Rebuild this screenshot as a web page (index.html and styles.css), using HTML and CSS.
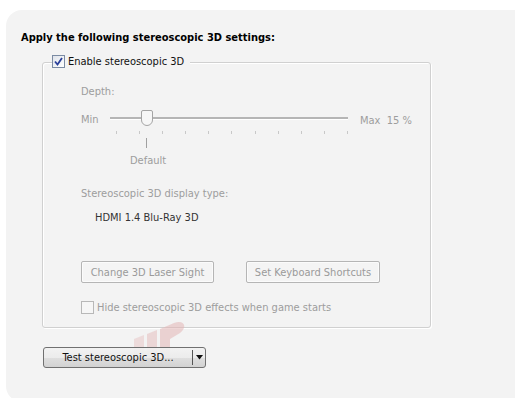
FILE: index.html
```html
<!DOCTYPE html>
<html>
<head>
<meta charset="utf-8">
<link rel="stylesheet" href="styles.css">
</head>
<body>
<div class="panel">
  <h1 class="title">Apply the following stereoscopic 3D settings:</h1>
  <div class="group">
    <div class="legend">
      <span class="cb checked"><svg width="9" height="9" viewBox="0 0 9 9"><path d="M1 4.5 L3.5 7.5 L8 1" fill="none" stroke="#2a3f9a" stroke-width="1.8"/></svg></span>
      <span class="legend-text">Enable stereoscopic 3D</span>
    </div>
    <div class="label depth">Depth:</div>
    <div class="slider-row">
      <span class="label min">Min</span>
      <div class="slider">
        <div class="track"></div>
        <div class="thumb"></div>
        <div class="ticks">
          <i></i><i></i><i></i><i></i><i></i><i></i><i></i><i></i><i></i><i></i><i></i>
        </div>
        <div class="default-tick"></div>
      </div>
      <span class="label max">Max&nbsp; 15 %</span>
    </div>
    <div class="label default">Default</div>
    <div class="label type">Stereoscopic 3D display type:</div>
    <div class="value">HDMI 1.4 Blu-Ray 3D</div>
    <div class="buttons">
      <button class="btn b1">Change 3D Laser Sight</button>
      <button class="btn b2">Set Keyboard Shortcuts</button>
    </div>
    <div class="hide-row">
      <span class="cb off"></span>
      <span class="label hide">Hide stereoscopic 3D effects when game starts</span>
    </div>
  </div>
  <svg class="watermark" width="60" height="45" viewBox="0 0 60 45">
    <path d="M4 20 L14 16 L14 44 L4 44 Z" fill="#e9c9c9" opacity="0.8"/>
    <path d="M17 15 L27 11 L27 44 L17 44 Z" fill="#e6c0c0" opacity="0.8"/>
    <path d="M30 10 L44 4 C54 0 58 8 50 14 L40 20 L40 40 L30 40 Z" fill="#e3b7b7" opacity="0.8"/>
  </svg>
  <div class="test">
    <span class="test-label">Test stereoscopic 3D...</span>
    <span class="test-sep"></span>
    <span class="test-arrow"><svg width="7" height="5" viewBox="0 0 7 5"><path d="M0 0 H7 L3.5 4.5 Z" fill="#111"/></svg></span>
  </div>
</div>
</body>
</html>
```
FILE: styles.css
```css
html, body {
  margin: 0;
  padding: 0;
  background: #ffffff;
  width: 515px;
  height: 398px;
  overflow: hidden;
}
.panel {
  position: relative;
  margin: 10px 0 0 6px;
  width: 509px;
  height: 392px;
  background: #f3f3f3;
  border-radius: 16px 0 0 16px;
  font-family: "DejaVu Sans Condensed", "DejaVu Sans", Tahoma, sans-serif;
  font-stretch: condensed;
  font-size: 11px;
  color: #1a1a1a;
  padding-top: 21px;
  box-sizing: border-box;
}
.title {
  margin: 0 0 0 15px;
  font-size: 11px;
  font-weight: bold;
  color: #000;
  line-height: 13px;
}
.group {
  position: relative;
  margin: 18px 0 0 36px;
  width: 389px;
  height: 266px;
  border: 1px solid #d0d0d0;
  box-shadow: inset 1px 1px 0 #ffffff, 1px 1px 0 #ffffff;
  border-radius: 3px;
  box-sizing: border-box;
  padding-left: 38px;
}
.legend {
  position: absolute;
  top: -8px;
  left: 9px;
  display: flex;
  align-items: center;
  gap: 3px;
  padding-right: 6px;
  background: #f3f3f3;
}
.cb {
  width: 11px;
  height: 11px;
  border: 1px solid #7b8ba3;
  background: linear-gradient(135deg, #dfe3ea, #ffffff);
  display: flex;
  align-items: center;
  justify-content: center;
}
.cb.off {
  border-color: #b8b8b8;
  background: #f6f6f6;
}
.legend-text {
  color: #111;
}
.label {
  color: #9d9d9d;
}
.depth {
  margin-top: 22px;
  line-height: 14px;
}
.slider-row {
  display: flex;
  align-items: flex-start;
  margin-top: 14px;
  height: 30px;
}
.min {
  width: 29px;
  line-height: 14px;
}
.slider {
  position: relative;
  width: 238px;
  height: 30px;
}
.track {
  position: absolute;
  left: 0;
  right: 0;
  top: 4px;
  height: 2px;
  background: #b5b5b5;
  border-bottom: 1px solid #ffffff;
}
.thumb {
  position: absolute;
  left: 31px;
  top: -3px;
  width: 10px;
  height: 14px;
  background: #f7f7f7;
  border: 1px solid #a5a5a5;
  border-radius: 2px 2px 6px 6px;
}
.ticks {
  position: absolute;
  top: 18px;
  left: 6px;
  right: 0;
  display: flex;
  justify-content: space-between;
}
.ticks i {
  width: 1px;
  height: 3px;
  background: #c8c8c8;
}
.default-tick {
  position: absolute;
  left: 36px;
  top: 25px;
  width: 1px;
  height: 10px;
  background: #a0a0a0;
}
.max {
  margin-left: 12px;
  line-height: 14px;
  margin-top: 1px;
  white-space: pre;
}
.default {
  margin-left: 49px;
  margin-top: 11px;
  line-height: 14px;
}
.type {
  margin-top: 19px;
  line-height: 14px;
}
.value {
  margin: 10px 0 0 14px;
  color: #333;
  line-height: 14px;
}
.buttons {
  display: flex;
  gap: 32px;
  margin-top: 36px;
}
.btn {
  font: inherit;
  height: 22px;
  border: 1px solid #b5b5b5;
  border-radius: 2px;
  background: #f4f4f4;
  color: #9a9a9a;
  padding: 0;
  box-shadow: inset 0 0 0 1px #fbfbfb;
}
.b1 { width: 133px; }
.b2 { width: 134px; }
.hide-row {
  display: flex;
  align-items: center;
  gap: 3px;
  margin-top: 18px;
}
.test {
  position: relative;
  z-index: 1;
  margin: 19px 0 0 37px;
  width: 163px;
  height: 21px;
  box-sizing: border-box;
  border: 1px solid #707070;
  border-radius: 3px;
  background: linear-gradient(rgba(242,242,242,0.92) 0%, rgba(235,235,235,0.92) 50%, rgba(221,221,221,0.92) 51%, rgba(207,207,207,0.92) 100%);
  display: flex;
  align-items: center;
  color: #111;
}
.test-label {
  width: 148px;
  text-align: center;
}
.test-sep {
  width: 1px;
  height: 15px;
  background: #555;
}
.test-arrow {
  flex: 1;
  display: flex;
  justify-content: center;
}
.watermark {
  position: absolute;
  left: 124px;
  top: 309px;
  opacity: 0.7;
}
```
